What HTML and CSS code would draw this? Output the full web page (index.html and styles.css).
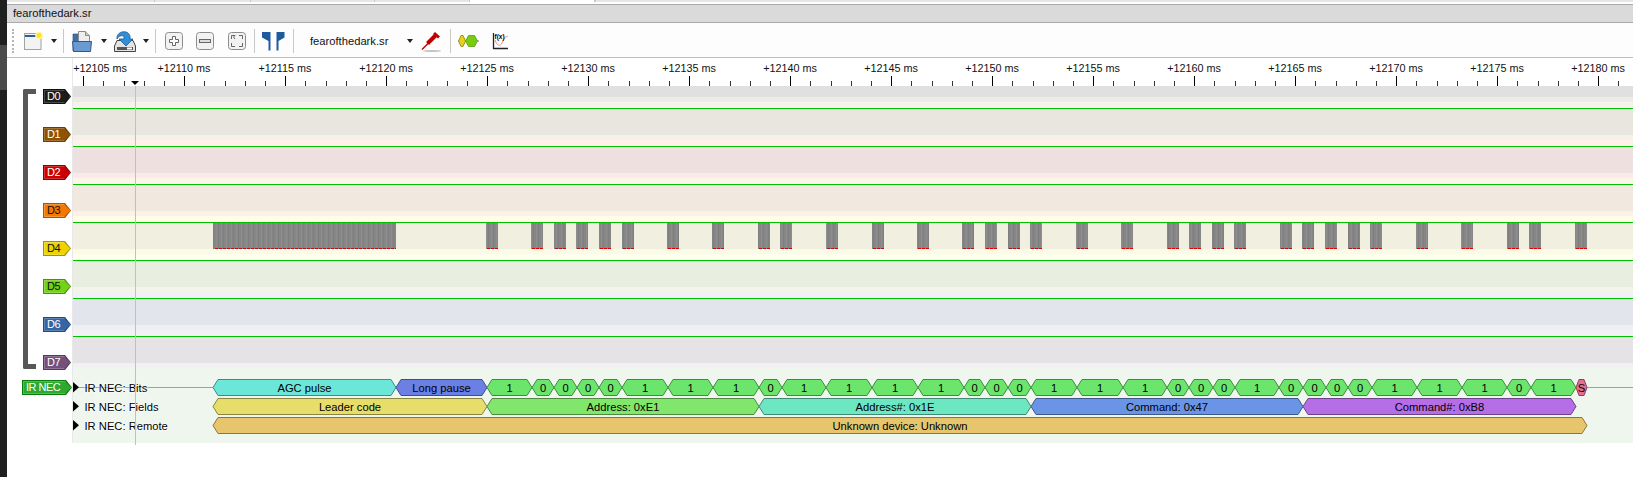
FILE: index.html
```html
<!DOCTYPE html>
<html>
<head lang="en">
    <meta charset="UTF-8">
    <title>fearofthedark.sr</title>
    <link rel="stylesheet" href="styles.css">
</head>
<body>
<div class="desk"><div class="desk-top"></div><div class="desk-mid"></div></div>
<div class="app">
    <div class="tabs"><i class="w148"></i><i class="w96"></i><i class="w124"></i><i class="w95"></i><i class="tab-on"></i><i class="tab-rest"></i></div>
    <div class="title">fearofthedark.sr</div>

    <div class="toolbar">
        <span class="grip"></span>
        <svg class="ml10" width="19" height="18" viewBox="0 0 19 18"><rect x=".5" y="1.500" width="16.500" height="16" fill="#f3f3f3" stroke="#a2a2a2"/><rect x="1" y="3" width="13" height="2" fill="#2c5c9c"/><circle cx="15" cy="3.500" r="3.800" fill="#fff3a0"/><circle cx="15" cy="3.500" r="2.400" fill="#ffe21e"/></svg>
        <span class="caret ml8"></span>
        <span class="sep ml6"></span>
        <svg class="ml8" width="20" height="21" viewBox="0 0 20 21"><path d="M1 3h5l1 2h6v15H1z" fill="#3e6ea8" stroke="#2f5a90" stroke-width=".7"/><path d="M6.500 .5h7l4 4V13h-11z" fill="#eee" stroke="#8a8a8a"/><path d="M13.500 .5v4h4" fill="#ccc" stroke="#8a8a8a"/><path d="M.5 10.500h19l-1 10H1.500z" fill="#6a9ad0" stroke="#2f5a90"/></svg>
        <span class="caret ml9"></span>
        <svg class="ml7" width="22" height="21" viewBox="0 0 22 21"><path d="M3 9.500h16l2.500 5.500v5.500H.5V15z" fill="#e4e4e4" stroke="#444"/><rect x="3" y="16" width="16" height="3" fill="#555"/><rect x="13" y="16.500" width="5" height="2" fill="#fff"/><path d="M3 8C2 0 14-2 16 5v3h3l-7 7-7-7h5V6C9 4 5 4 3 8z" fill="#2f8fd8" stroke="#1a5a94" stroke-width=".8"/></svg>
        <span class="caret ml7"></span>
        <span class="sep ml6"></span>
        <svg class="ml9" width="18" height="18" viewBox="0 0 18 18"><rect x=".5" y=".5" width="17" height="17" rx="3" fill="#f2f2f2" stroke="#8c8c8c"/><path d="M7.500 4.500h3v3h3v3h-3v3h-3v-3h-3v-3h3z" fill="#fff" stroke="#666"/></svg>
        <svg class="ml13" width="18" height="18" viewBox="0 0 18 18"><rect x=".5" y=".5" width="17" height="17" rx="3" fill="#f2f2f2" stroke="#8c8c8c"/><rect x="3.500" y="7.500" width="11" height="3" fill="#ddd" stroke="#666"/></svg>
        <svg class="ml14" width="18" height="18" viewBox="0 0 18 18"><rect x=".5" y=".5" width="17" height="17" rx="3" fill="#f2f2f2" stroke="#8c8c8c"/><path d="M3.500 7V3.500H7L5.500 5 7 7M11 3.500h3.500V7M14.500 11v3.500H11M7 14.500H3.500V11" fill="none" stroke="#666"/></svg>
        <span class="sep ml8"></span>
        <svg class="ml7" width="23" height="19" viewBox="0 0 23 19"><path d="M0 0h8.500v18.500h-2V9L0 5.500zM14.500 0h8v5.500L16.500 9v9.500h-2z" fill="#1f5a9e"/></svg>
        <span class="sep ml8"></span>
        <span class="session ml16">fearofthedark.sr</span>
        <span class="caret ml18"></span>
        <svg class="ml8" width="20" height="21" viewBox="0 0 20 21"><ellipse cx="11" cy="20" rx="9" ry="1" fill="#c4c4c4"/><path d="M1 18.500l7-7" stroke="#c00000" stroke-width="1.500"/><path d="M6.500 12.500l8-8" stroke="#c00000" stroke-width="4"/><path d="M13 2l5 4.500" stroke="#c00000" stroke-width="3"/></svg>
        <span class="sep ml9"></span>
        <svg class="ml7" width="21" height="12" viewBox="0 0 21 12"><path d="M0 6h21" stroke="#555" stroke-width=".8"/><path d="M.5 6L3 .5h2L7.500 6 5 11.500H3z" fill="#e6d21e" stroke="#8a7d10" stroke-width=".8"/><path d="M7.500 6L10.500.5h6L19.500 6l-3 5.500h-6z" fill="#79cb0e" stroke="#5a9a10" stroke-width=".8"/></svg>
        <svg class="ml13" width="17" height="17" viewBox="0 0 17 17"><path d="M3 7C6 15 9 13 11 8s3-4 5-5" fill="none" stroke="#f08a8a"/><path d="M1.500 0v15.500H16" fill="none" stroke="#222" stroke-width="1.300"/><text class="fx" x="2.500" y="6">f(x)</text></svg>
    </div>

    <div class="ruler-row">
        <div class="gutter"></div>
        <svg class="ruler" width="1560" height="28" viewBox="73 58 1560 28">
            <defs>
                <pattern id="ticks" patternUnits="userSpaceOnUse" x="83" y="76" width="101" height="10">
                    <rect x="0" width="1" height="10" fill="#000"/>
                    <rect x="20" y="5" width="1" height="5" fill="#333"/>
                    <rect x="41" y="5" width="1" height="5" fill="#333"/>
                    <rect x="61" y="5" width="1" height="5" fill="#333"/>
                    <rect x="81" y="5" width="1" height="5" fill="#333"/>
                </pattern>
            </defs>
            <rect x="73" y="76" width="1560" height="10" fill="url(#ticks)"/>
            <text x="100" y="72">+12105 ms</text>
            <text x="184" y="72">+12110 ms</text>
            <text x="285" y="72">+12115 ms</text>
            <text x="386" y="72">+12120 ms</text>
            <text x="487" y="72">+12125 ms</text>
            <text x="588" y="72">+12130 ms</text>
            <text x="689" y="72">+12135 ms</text>
            <text x="790" y="72">+12140 ms</text>
            <text x="891" y="72">+12145 ms</text>
            <text x="992" y="72">+12150 ms</text>
            <text x="1093" y="72">+12155 ms</text>
            <text x="1194" y="72">+12160 ms</text>
            <text x="1295" y="72">+12165 ms</text>
            <text x="1396" y="72">+12170 ms</text>
            <text x="1497" y="72">+12175 ms</text>
            <text x="1598" y="72">+12180 ms</text>
            <path d="M131 81h8l-4 4z" fill="#000"/>
        </svg>
    </div>

    <div class="view">
        <div class="group-bracket"></div>
        <div class="cursor-line"></div>

        <div class="row d0">
            <div class="gutter"><div class="sig"><span>D0</span></div></div>
            <div class="band"></div>
        </div>
        <div class="row d1">
            <div class="gutter"><div class="sig"><span>D1</span></div></div>
            <div class="band"></div>
        </div>
        <div class="row d2">
            <div class="gutter"><div class="sig"><span>D2</span></div></div>
            <div class="band"></div>
        </div>
        <div class="row d3">
            <div class="gutter"><div class="sig"><span>D3</span></div></div>
            <div class="band"></div>
        </div>
        <div class="row d4">
            <div class="gutter"><div class="sig"><span>D4</span></div></div>
            <div class="band">
                <svg class="wave" width="1560" height="26" viewBox="73 223 1560 26">
                    <defs>
                        <pattern id="logic" patternUnits="userSpaceOnUse" x="0" y="223" width="5" height="26">
                            <rect width="5" height="26" fill="#868686"/>
                            <rect x="1" width="1" height="26" fill="#8e8e8e"/>
                            <rect x="3" width="1" height="26" fill="#7f7f7f"/>
                        </pattern>
                    </defs>
                    <path fill="url(#logic)" d="M213 223h183v26h-183zM486 223h12v26h-12zM531 223h12v26h-12zM554 223h12v26h-12zM576 223h12v26h-12zM599 223h12v26h-12zM622 223h12v26h-12zM667 223h12v26h-12zM712 223h12v26h-12zM758 223h12v26h-12zM780 223h12v26h-12zM826 223h12v26h-12zM872 223h12v26h-12zM917 223h12v26h-12zM962 223h12v26h-12zM985 223h12v26h-12zM1008 223h12v26h-12zM1030 223h12v26h-12zM1076 223h12v26h-12zM1121 223h12v26h-12zM1167 223h12v26h-12zM1189 223h12v26h-12zM1212 223h12v26h-12zM1234 223h12v26h-12zM1280 223h12v26h-12zM1302 223h12v26h-12zM1325 223h12v26h-12zM1348 223h12v26h-12zM1370 223h12v26h-12zM1416 223h12v26h-12zM1461 223h12v26h-12zM1507 223h12v26h-12zM1529 223h12v26h-12zM1575 223h12v26h-12z"/>
                    <path class="low" d="M215 248.500h181M487 248.500h11M532 248.500h11M555 248.500h11M577 248.500h11M600 248.500h11M623 248.500h11M668 248.500h11M713 248.500h11M759 248.500h11M781 248.500h11M827 248.500h11M873 248.500h11M918 248.500h11M963 248.500h11M986 248.500h11M1009 248.500h11M1031 248.500h11M1077 248.500h11M1122 248.500h11M1168 248.500h11M1190 248.500h11M1213 248.500h11M1235 248.500h11M1281 248.500h11M1303 248.500h11M1326 248.500h11M1349 248.500h11M1371 248.500h11M1417 248.500h11M1462 248.500h11M1508 248.500h11M1530 248.500h11M1576 248.500h11"/>
                </svg>
            </div>
        </div>
        <div class="row d5">
            <div class="gutter"><div class="sig"><span>D5</span></div></div>
            <div class="band"></div>
        </div>
        <div class="row d6">
            <div class="gutter"><div class="sig"><span>D6</span></div></div>
            <div class="band"></div>
        </div>
        <div class="row d7">
            <div class="gutter"><div class="sig"><span>D7</span></div></div>
            <div class="band"></div>
        </div>

        <div class="row decoder">
            <div class="gutter"><div class="sig"><span>IR NEC</span></div></div>
            <svg class="annotations" width="1560" height="75" viewBox="73 368 1560 75">
                <path class="idle" d="M73 387.500H213M1587 387.500H1633"/>

                <path class="a-agc" d="M213 387.500l5-8H391l5 8-5 8H218z"/>
                <path class="a-pause" d="M396 387.500l5-8H482l5 8-5 8H401z"/>
                <path class="a-bit" d="M487 387.500l5-8H527l5 8-5 8H492zM532 387.500l5-8H549l5 8-5 8H537zM554 387.500l5-8H572l5 8-5 8H559zM577 387.500l5-8H594l5 8-5 8H582zM599 387.500l5-8H617l5 8-5 8H604zM622 387.500l5-8H663l5 8-5 8H627zM668 387.500l5-8H708l5 8-5 8H673zM713 387.500l5-8H754l5 8-5 8H718zM759 387.500l5-8H777l5 8-5 8H764zM782 387.500l5-8H821l5 8-5 8H787zM826 387.500l5-8H867l5 8-5 8H831zM872 387.500l5-8H913l5 8-5 8H877zM918 387.500l5-8H959l5 8-5 8H923zM964 387.500l5-8H980l5 8-5 8H969zM985 387.500l5-8H1003l5 8-5 8H990zM1008 387.500l5-8H1026l5 8-5 8H1013zM1031 387.500l5-8H1072l5 8-5 8H1036zM1077 387.500l5-8H1118l5 8-5 8H1082zM1123 387.500l5-8H1162l5 8-5 8H1128zM1167 387.500l5-8H1184l5 8-5 8H1172zM1189 387.500l5-8H1208l5 8-5 8H1194zM1213 387.500l5-8H1230l5 8-5 8H1218zM1235 387.500l5-8H1274l5 8-5 8H1240zM1279 387.500l5-8H1298l5 8-5 8H1284zM1303 387.500l5-8H1321l5 8-5 8H1308zM1326 387.500l5-8H1343l5 8-5 8H1331zM1348 387.500l5-8H1367l5 8-5 8H1353zM1372 387.500l5-8H1412l5 8-5 8H1377zM1417 387.500l5-8H1457l5 8-5 8H1422zM1462 387.500l5-8H1502l5 8-5 8H1467zM1507 387.500l5-8H1526l5 8-5 8H1512zM1531 387.500l5-8H1571l5 8-5 8H1536z"/>
                <path class="a-start" d="M1576 387.500l3-8h5l3 8-3 8h-5z"/>

                <path class="a-leader" d="M213 406.500l5-8H482l5 8-5 8H218z"/>
                <path class="a-addr" d="M487 406.500l5-8H754l5 8-5 8H492z"/>
                <path class="a-addrn" d="M759 406.500l5-8H1026l5 8-5 8H764z"/>
                <path class="a-cmd" d="M1031 406.500l5-8H1298l5 8-5 8H1036z"/>
                <path class="a-cmdn" d="M1303 406.500l5-8H1571l5 8-5 8H1308z"/>

                <path class="a-remote" d="M213 425.500l5-8H1582l5 8-5 8H218z"/>

                <path class="arrow" d="M73 382v10.500l6-5.250zM73 401v10.500l6-5.250zM73 420v10.500l6-5.250z"/>
                <g class="rowname">
                    <text x="84.500" y="391.500">IR NEC: Bits</text>
                    <text x="84.500" y="410.500">IR NEC: Fields</text>
                    <text x="84.500" y="429.500">IR NEC: Remote</text>
                </g>
                <g class="anno-text">
                    <text x="304.500" y="391.500">AGC pulse</text>
                    <text x="441.500" y="391.500">Long pause</text>
                    <text x="509.500" y="391.500">1</text>
                    <text x="543" y="391.500">0</text>
                    <text x="565.500" y="391.500">0</text>
                    <text x="588" y="391.500">0</text>
                    <text x="610.500" y="391.500">0</text>
                    <text x="645" y="391.500">1</text>
                    <text x="690.500" y="391.500">1</text>
                    <text x="736" y="391.500">1</text>
                    <text x="770.500" y="391.500">0</text>
                    <text x="804" y="391.500">1</text>
                    <text x="849" y="391.500">1</text>
                    <text x="895" y="391.500">1</text>
                    <text x="941" y="391.500">1</text>
                    <text x="974.500" y="391.500">0</text>
                    <text x="996.500" y="391.500">0</text>
                    <text x="1019.500" y="391.500">0</text>
                    <text x="1054" y="391.500">1</text>
                    <text x="1100" y="391.500">1</text>
                    <text x="1145" y="391.500">1</text>
                    <text x="1178" y="391.500">0</text>
                    <text x="1201" y="391.500">0</text>
                    <text x="1224" y="391.500">0</text>
                    <text x="1257" y="391.500">1</text>
                    <text x="1291" y="391.500">0</text>
                    <text x="1314.500" y="391.500">0</text>
                    <text x="1337" y="391.500">0</text>
                    <text x="1360" y="391.500">0</text>
                    <text x="1394.500" y="391.500">1</text>
                    <text x="1439.500" y="391.500">1</text>
                    <text x="1484.500" y="391.500">1</text>
                    <text x="1519" y="391.500">0</text>
                    <text x="1553.500" y="391.500">1</text>
                    <text x="1581.500" y="391.500">S</text>
                    <text x="350" y="410.500">Leader code</text>
                    <text x="623" y="410.500">Address: 0xE1</text>
                    <text x="895" y="410.500">Address#: 0x1E</text>
                    <text x="1167" y="410.500">Command: 0x47</text>
                    <text x="1439.500" y="410.500">Command#: 0xB8</text>
                    <text x="900" y="429.500">Unknown device: Unknown</text>
                </g>
            </svg>
        </div>
    </div>
</div>
</body>
</html>
```

FILE: styles.css
```css
* {
    margin: 0;
    padding: 0;
    box-sizing: border-box;
}

body {
    display: flex;
    height: 477px;
    overflow: hidden;
    background-color: #fff;
    font-family: "Liberation Sans", sans-serif;
    font-size: 11.2px;
    color: #111;
}

/* sliver of the desktop on the left */
.desk {
    width: 7px;
    flex: none;
    background-color: #1f1f1f;
}

.desk-top {
    height: 45px;
}

.desk-mid {
    height: 45px;
    background-color: #4a4a4a;
}

.app {
    flex: 1;
    min-width: 0;
}

.tabs {
    display: flex;
    height: 4px;
    background-color: #fff;
}

.tabs i {
    height: 2px;
    background-color: #e6e6e6;
    border-right: 1px solid #c8c8c8;
}

.w148 { width: 148px; }
.w96 { width: 96px; }
.w124 { width: 124px; }
.w95 { width: 95px; }

.tabs .tab-on {
    width: 125px;
    background-color: #fff;
}

.tabs .tab-rest {
    flex: 1;
    border-right: 0;
    border-left: 1px solid #c8c8c8;
}

.title {
    height: 19px;
    padding-left: 6px;
    line-height: 17px;
    background-color: #dadada;
    border-top: 1px solid #aaa;
    border-bottom: 1px solid #aaa;
}

.toolbar {
    display: flex;
    align-items: center;
    height: 35px;
    padding-top: 2px;
    background-color: #fdfdfd;
    border-bottom: 1px solid #bdbdbd;
}

.grip {
    width: 2px;
    height: 24px;
    margin-left: 5px;
    border-left: 2px dotted #b4b4b4;
}

.caret {
    width: 0;
    height: 0;
    border-top: 4px solid #222;
    border-left: 3px solid transparent;
    border-right: 3px solid transparent;
}

.sep {
    width: 1px;
    height: 24px;
    background-color: #c8c8c8;
}

.session {
    width: 79px;
    white-space: nowrap;
}

.fx {
    font-size: 6.5px;
    font-weight: bold;
}

.ml6 { margin-left: 6px; }
.ml7 { margin-left: 7px; }
.ml8 { margin-left: 8px; }
.ml9 { margin-left: 9px; }
.ml10 { margin-left: 10px; }
.ml13 { margin-left: 13px; }
.ml14 { margin-left: 14px; }
.ml16 { margin-left: 16px; }
.ml18 { margin-left: 18px; }

.ruler-row {
    display: flex;
    height: 28px;
}

.gutter {
    width: 66px;
    flex: none;
    border-right: 1px solid #e8e8e8;
}

.ruler,
.wave,
.annotations {
    display: block;
}

.ruler text {
    font-size: 10.8px;
    text-anchor: middle;
    fill: #111;
}

.view {
    position: relative;
}

.row {
    display: flex;
    height: 38px;
}

.band {
    flex: 1;
    border-top: 1px solid #00c000;
}

.row .gutter {
    padding-top: 19px;
}

/* top of the row is the signal area, then two paler strips */
.d0 { height: 22px; }
.d0 .gutter { padding-top: 3px; }
.d0 .band {
    border-top: 0;
    background: linear-gradient(#e0e0e0 11px, #edeae8 11px 16px, #f5f3ec 16px);
}
.d1 .band { background: linear-gradient(#e9e6e0 26px, #f7efea 26px 31px, #fdf1ea 31px); }
.d2 .band { background: linear-gradient(#eee0e0 26px, #fbeae8 26px 31px, #fef5ea 31px); }
.d3 .band { background: linear-gradient(#f1e9e0 26px, #fdf0e5 26px 31px, #fffde8 31px); }
.d4 .band { background: linear-gradient(#f1efe0 26px, #fbfae6 26px 31px, #fefeee 31px); }
.d5 .band { background: linear-gradient(#e8eee0 26px, #f3f6e6 26px 31px, #eff1f6 31px); }
.d6 .band { background: linear-gradient(#e2e5eb 26px, #eff0f5 26px 31px, #f2f1f5 31px); }
.d7 { height: 32px; }
.d7 .band { background: linear-gradient(#e5e3e6 26px, #f3f0f3 26px); }

.low {
    fill: none;
    stroke: #e00000;
    stroke-dasharray: 3 1;
}

.sig {
    width: 28px;
    height: 15px;
    margin-left: 36px;
    padding: 1px;
    color: #fff;
    background-color: var(--edge);
    clip-path: polygon(0 0, calc(100% - 6px) 0, 100% 50%, calc(100% - 6px) 100%, 0 100%);
}

.sig span {
    display: block;
    height: 13px;
    padding-left: 3px;
    font-size: 11px;
    line-height: 13px;
    letter-spacing: -0.5px;
    white-space: nowrap;
    background-color: var(--fill);
    box-shadow: inset 0 0 0 1px rgba(255, 255, 255, 0.2);
    clip-path: polygon(0 0, calc(100% - 6px) 0, 100% 50%, calc(100% - 6px) 100%, 0 100%);
}

.d0 .sig { --edge: #111; --fill: #1c1c1c; }
.d1 .sig { --edge: #6b3e01; --fill: #8f5202; }
.d2 .sig { --edge: #8a0000; --fill: #cc0000; }
.d3 .sig { --edge: #a85400; --fill: #f57900; color: #111; }
.d4 .sig { --edge: #a39200; --fill: #edd400; color: #111; }
.d5 .sig { --edge: #4e8f0f; --fill: #73d216; color: #111; }
.d6 .sig { --edge: #204a87; --fill: #3465a4; }
.d7 .sig { --edge: #55395a; --fill: #75507b; }

.decoder {
    height: 75px;
}

.decoder .gutter {
    padding-top: 12px;
}

.decoder .sig {
    width: 50px;
    margin-left: 15px;
    --edge: #0a7c0a;
    --fill: #2ea82e;
}

.annotations {
    background-color: #eef6ee;
}

.annotations path {
    stroke-width: 1;
}

.idle { stroke: #a0a0a0; fill: none; }
.a-agc { fill: #6de6da; stroke: #3f8a84; }
.a-pause { fill: #6c7fe3; stroke: #3f4c8a; }
.a-bit { fill: #6ce56c; stroke: #3f8a3f; }
.a-start { fill: #e66e92; stroke: #8a4258; }
.a-leader { fill: #e6dd6a; stroke: #8a853f; }
.a-addr { fill: #80e76c; stroke: #4d8a3f; }
.a-addrn { fill: #6de6c2; stroke: #3f8a74; }
.a-cmd { fill: #6a94e6; stroke: #3f588a; }
.a-cmdn { fill: #b56ee6; stroke: #6c428a; }
.a-remote { fill: #e6c56c; stroke: #8a763f; }
.arrow { fill: #000; }

.rowname text {
    paint-order: stroke;
    stroke: #fff;
    stroke-width: 1.5px;
    stroke-opacity: 0.6;
}

.anno-text text {
    text-anchor: middle;
}

.cursor-line {
    position: absolute;
    top: 0;
    left: 128px;
    width: 1px;
    height: 359px;
    background-color: #c0c0c0;
}

.group-bracket {
    position: absolute;
    top: 3px;
    left: 16px;
    width: 13px;
    height: 280px;
    border: 5px solid #585858;
    border-right: 0;
    border-top-left-radius: 2px;
    border-bottom-left-radius: 2px;
}
```
